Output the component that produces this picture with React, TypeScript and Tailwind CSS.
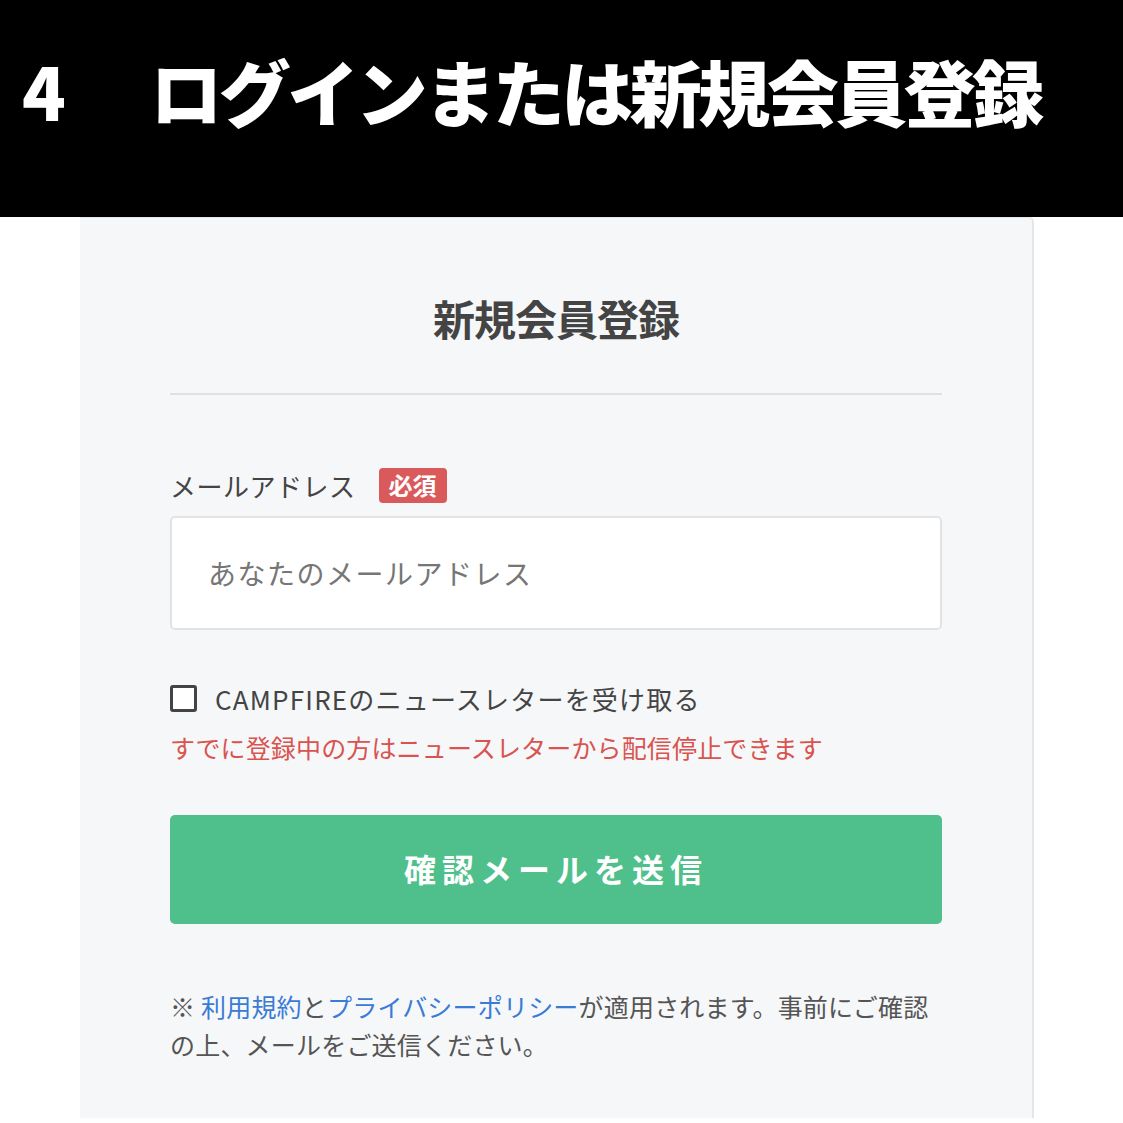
import React from "react";

const jp = { fontFamily: '"Noto Sans CJK JP", "Noto Sans", sans-serif' };

function Header() {
  return (
    <div className="bg-black h-[217px] flex items-center">
      <h1 className="text-white font-black text-[72px] leading-none tracking-[-3.5px] whitespace-nowrap pl-[22px] -mt-[38px]">
        <span>4</span>
        <span className="ml-[88px]">ログインまたは新規会員登録</span>
      </h1>
    </div>
  );
}

function SignupCard() {
  return (
    <div className="ml-[80px] w-[954px] h-[901px] bg-[#f6f7f9] border-t border-r-2 border-[#e4e6e9] rounded-tr-[5px] pt-[68px] pl-[90px] pr-[90px]">
      <h2 className="text-center text-[42px] leading-[63px] font-bold text-[#444] tracking-[-1px]">
        新規会員登録
      </h2>
      <div className="mt-[44px] h-[2px] bg-[#dfe1e4]" />

      <div className="mt-[72px] h-[36px] flex items-center gap-[23px]">
        <span className="text-[26px] text-[#444] tracking-[0.5px]">メールアドレス</span>
        <span className="h-[35px] px-[10px] flex items-center rounded-[4px] bg-[#da5a5b] text-white text-[24px] font-bold">
          必須
        </span>
      </div>

      <input
        type="text"
        placeholder="あなたのメールアドレス"
        className="mt-[13px] w-full h-[114px] bg-white border-2 border-[#e2e3e5] rounded-[5px] pl-[36px] text-[28px] tracking-[1.5px] placeholder:text-[#767676] outline-none"
        style={jp}
      />

      <label className="mt-[50px] h-[36px] flex items-center">
        <span className="w-[27px] h-[27px] border-[3px] border-[#444] rounded-[3px] bg-white" />
        <span className="ml-[18px] text-[26px] text-[#444] tracking-[1.2px]">CAMPFIREのニュースレターを受け取る</span>
      </label>

      <p className="mt-[14px] h-[36px] flex items-center text-[25px] text-[#d9534f] tracking-[0.15px]">
        すでに登録中の方はニュースレターから配信停止できます
      </p>

      <button
        className="mt-[49px] w-full h-[109px] bg-[#4fbf8b] rounded-[5px] text-white text-[32px] font-bold tracking-[6px] pb-[4px]"
        style={jp}
      >
        確認メールを送信
      </button>

      <p className="mt-[63px] text-[25px] leading-[38px] text-[#555] tracking-[0.2px] whitespace-nowrap">
        ※ <span className="text-[#3a7bd5]">利用規約</span>と<span className="text-[#3a7bd5]">プライバシーポリシー</span>が適用されます。事前にご確認
        <br />
        の上、メールをご送信ください。
      </p>
    </div>
  );
}

export default function App() {
  return (
    <div className="w-[1123px] h-[1123px] bg-white overflow-hidden" style={jp}>
      <Header />
      <SignupCard />
    </div>
  );
}
